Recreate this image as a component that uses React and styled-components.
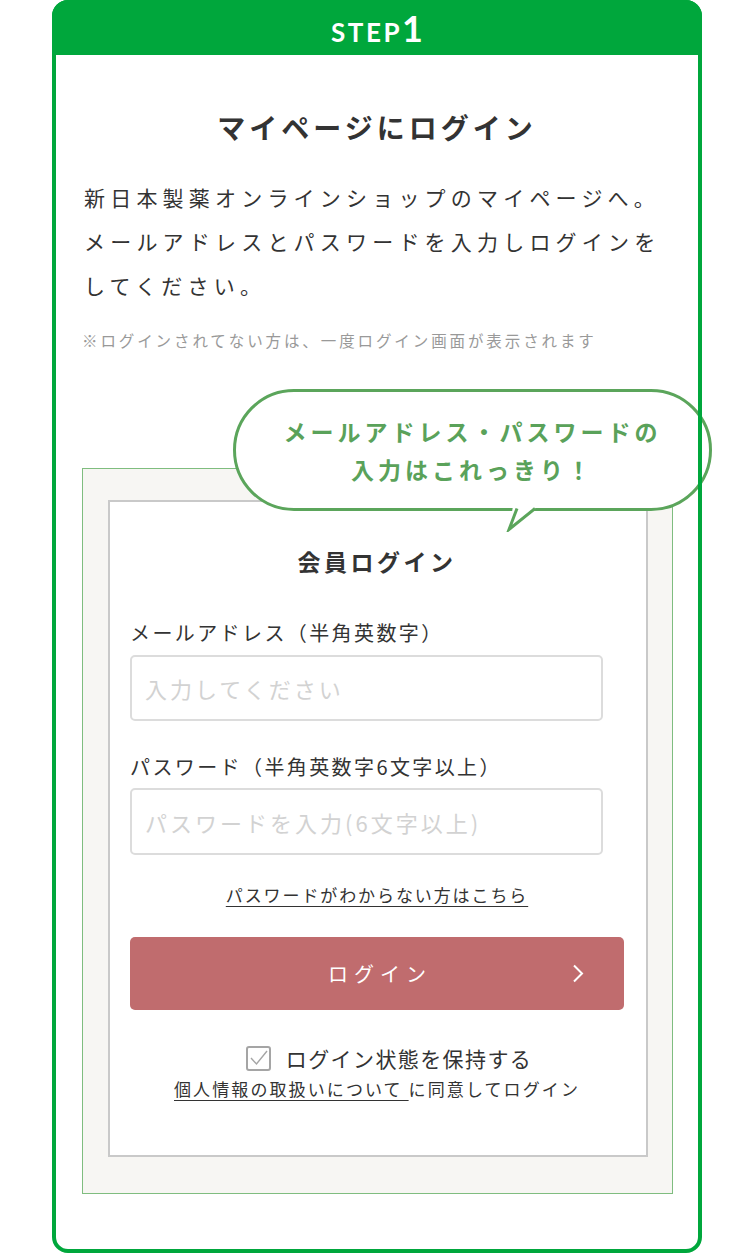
import React from 'react'
import styled, { createGlobalStyle } from 'styled-components'

const GlobalStyle = createGlobalStyle`
  * { box-sizing: border-box; }
  body {
    margin: 0;
    background: #fff;
    font-family: "Noto Sans CJK JP", "Noto Sans", sans-serif;
    color: #333;
  }
`

const Page = styled.div`
  width: 750px;
  padding-left: 52px;
`

const Card = styled.section`
  position: relative;
  width: 650px;
  height: 1253px;

  &::after {
    content: '';
    position: absolute;
    inset: 0;
    border: 4px solid #00a73c;
    border-radius: 16px;
    pointer-events: none;
    z-index: 3;
  }
`

const Header = styled.div`
  height: 55px;
  background: #00a73c;
  border-radius: 16px 16px 0 0;
  display: flex;
  justify-content: center;
  align-items: baseline;
  padding-top: 10px;
  color: #fff;
  font-family: Lato, "Liberation Sans", sans-serif;
  font-weight: 700;

  .word {
    font-size: 26px;
    letter-spacing: 2.5px;
  }
  .num {
    font-size: 36px;
    line-height: 1;
    margin-left: 0;
  }
`

const Body = styled.div`
  padding: 0 30px;
`

const Title = styled.h1`
  margin: 52px 0 0;
  text-align: center;
  font-size: 28px;
  line-height: 40px;
  font-weight: 700;
  letter-spacing: 4px;
  color: #333;
`

const Lead = styled.p`
  margin: 28px 0 0;
  padding-left: 2px;
  font-size: 21px;
  line-height: 44px;
  letter-spacing: 5.2px;
  color: #333;
`

const Note = styled.p`
  margin: 21px 0 0;
  font-size: 15.5px;
  line-height: 24px;
  letter-spacing: 2.9px;
  color: #999;
`

const FormArea = styled.div`
  position: relative;
  margin-top: 116px;
  width: 591px;
  background: #f7f6f3;
  border: 1px solid #7fbd7f;
  padding: 31px 24px 36px 25px;
`

const Bubble = styled.div`
  position: absolute;
  left: 150px;
  top: -80px;
  width: 479px;
  height: 122px;
  background: #fff;
  border: 3px solid #5ba55b;
  border-radius: 61px;
  display: flex;
  flex-direction: column;
  justify-content: center;
  align-items: center;
  color: #5aa25a;
  font-size: 23px;
  font-weight: 700;
  line-height: 38px;
  letter-spacing: 4px;
  z-index: 2;

  svg {
    position: absolute;
    left: 270px;
    top: 114px;
  }
`

const LoginBox = styled.div`
  background: #fff;
  border: 2px solid #c9c9c9;
  height: 657px;
  padding: 43px 22px 0 20px;
`

const BoxTitle = styled.h2`
  margin: 0;
  text-align: center;
  font-size: 23px;
  line-height: 32px;
  font-weight: 700;
  letter-spacing: 3.5px;
  color: #333;
`

const Label = styled.label`
  display: block;
  margin-top: ${p => p.$gap}px;
  font-size: 20px;
  line-height: 28px;
  letter-spacing: 2.4px;
  color: #333;
`

const Input = styled.input`
  display: block;
  width: 473px;
  height: ${p => p.$h}px;
  margin-top: ${p => p.$gap}px;
  border: 2px solid #dcdcdc;
  border-radius: 5px;
  padding: 0 13px;
  font-family: "Noto Sans CJK JP", sans-serif;
  font-size: 22px;
  letter-spacing: 3px;
  color: #333;
  outline: none;

  &::placeholder {
    color: #d2d2d2;
  }
`

const ForgotLink = styled.a`
  display: block;
  margin-top: 27px;
  text-align: center;
  font-size: 17px;
  line-height: 26px;
  letter-spacing: 1.9px;
  color: #333;
  text-decoration: underline;
  text-underline-offset: 4px;
`

const LoginButton = styled.button`
  display: grid;
  grid-template-columns: 1fr auto 1fr;
  align-items: center;
  width: 494px;
  height: 73px;
  margin-top: 29px;
  border: none;
  border-radius: 5px;
  background: #c06c6e;
  color: #fff;
  font-family: "Noto Sans CJK JP", sans-serif;
  font-size: 20px;
  letter-spacing: 6px;
  padding: 0;

  span {
    grid-column: 2;
    margin-left: 6px;
  }
  svg {
    grid-column: 3;
    justify-self: end;
    margin-right: 40px;
  }
`

const KeepRow = styled.label`
  display: flex;
  justify-content: center;
  align-items: center;
  gap: 15px;
  margin-top: 34px;
  padding-left: 24px;
  height: 28px;
  font-size: 21px;
  letter-spacing: 1.4px;
  color: #333;
`

const CheckBox = styled.span`
  display: flex;
  align-items: center;
  justify-content: center;
  width: 25px;
  height: 25px;
  border: 2px solid #a5a5a5;
  border-radius: 3px;
`

const Consent = styled.p`
  margin: 4px 0 0;
  text-align: center;
  font-size: 17px;
  line-height: 26px;
  letter-spacing: 2.1px;
  color: #333;

  a {
    color: #333;
    text-decoration: underline;
    text-underline-offset: 4px;
  }
`

export default function App() {
  return (
    <>
      <GlobalStyle />
      <Page>
        <Card>
          <Header>
            <span className='word'>STEP</span>
            <span className='num'>1</span>
          </Header>
          <Body>
            <Title>マイページにログイン</Title>
            <Lead>
              新日本製薬オンラインショップのマイページへ。メールアドレスとパスワードを入力しログインをしてください。
            </Lead>
            <Note>※ログインされてない方は、一度ログイン画面が表示されます</Note>

            <FormArea>
              <Bubble>
                <div>メールアドレス・パスワードの</div>
                <div>入力はこれっきり！</div>
                <svg width='34' height='26' viewBox='0 0 34 26'>
                  <polygon points='7,0 3,24 32,0' fill='#fff' />
                  <polyline
                    points='11,2.5 3,23.5 29,2.5'
                    fill='none'
                    stroke='#5ba55b'
                    strokeWidth='3'
                    strokeLinejoin='miter'
                  />
                </svg>
              </Bubble>

              <LoginBox>
                <BoxTitle>会員ログイン</BoxTitle>
                <Label $gap={42}>メールアドレス（半角英数字）</Label>
                <Input $gap={8} $h={66} placeholder='入力してください' />
                <Label $gap={32}>パスワード（半角英数字6文字以上）</Label>
                <Input $gap={7} $h={67} type='password' placeholder='パスワードを入力(6文字以上)' />
                <ForgotLink href='#'>パスワードがわからない方はこちら</ForgotLink>
                <LoginButton>
                  <span>ログイン</span>
                  <svg width='12' height='19' viewBox='0 0 12 19'>
                    <polyline points='2,1.5 10,9.5 2,17.5' fill='none' stroke='#fff' strokeWidth='2' />
                  </svg>
                </LoginButton>
                <KeepRow>
                  <CheckBox>
                    <svg width='21' height='21' viewBox='0 0 21 21'>
                      <polyline points='3,10 8.5,16 19,3' fill='none' stroke='#a5a5a5' strokeWidth='1.4' />
                    </svg>
                  </CheckBox>
                  ログイン状態を保持する
                </KeepRow>
                <Consent>
                  <a href='#'>個人情報の取扱いについて </a>に同意してログイン
                </Consent>
              </LoginBox>
            </FormArea>
          </Body>
        </Card>
      </Page>
    </>
  )
}
